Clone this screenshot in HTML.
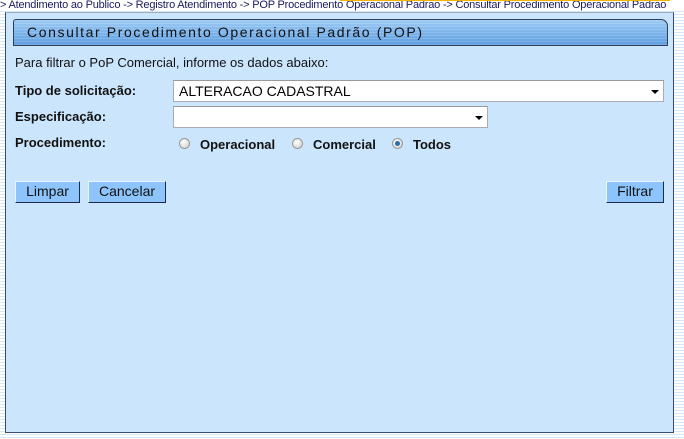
<!DOCTYPE html>
<html><head><meta charset="utf-8"><style>
*{margin:0;padding:0;box-sizing:border-box}
body{width:684px;height:439px;overflow:hidden;position:relative;font-family:"Liberation Sans",Arial,sans-serif;
background:repeating-linear-gradient(to bottom,#ffffff 0,#ffffff 2px,#d4e6f7 2px,#d4e6f7 3px);}
.crumb{position:absolute;left:0;top:0;width:684px;height:11px;background:#fff;font-size:11px;line-height:10px;color:#1a1a60;white-space:nowrap;overflow:hidden;letter-spacing:-0.2px}
.crumb:after{content:"";position:absolute;left:340px;right:14px;top:0;height:1px;background:#f4b400}
.panel{position:absolute;left:5px;top:12px;width:669px;height:421px;background:#cbe5fd;border:1px solid #3a4c66;border-top:1px solid #9ab}
.title{position:absolute;left:13px;top:19px;width:655px;height:27px;border:1px solid #2c3e58;border-top-right-radius:7px;border-top-left-radius:3px;
background:repeating-linear-gradient(to bottom,rgba(255,255,255,.15) 0,rgba(255,255,255,.15) 1px,transparent 1px,transparent 3px),linear-gradient(#9ccaf5,#5e9ee0);
font-size:14px;letter-spacing:1.6px;color:#111;padding:4px 0 0 13px}
.t{position:absolute;font-size:13px;color:#111;white-space:nowrap}
.b{font-weight:bold}
.sel{position:absolute;background:#fff;border:1px solid #aab;border-top-color:#999;font-size:14px;padding:2px 0 0 5px;color:#000}
.sel:after{content:"";position:absolute;right:4px;top:9px;border:4px solid transparent;border-top:4px solid #000;border-bottom:0}
.rad{position:absolute;width:11px;height:11px;border-radius:50%;border:1px solid #999;background:radial-gradient(circle at 40% 35%,#fff,#ccc)}
.rad.on:after{content:"";position:absolute;left:2px;top:2px;width:5px;height:5px;border-radius:50%;background:#2a6fa8}
.btn{position:absolute;height:22px;background:#8cc4fb;border:1px solid;border-color:#e8f4ff #1c2c44 #1c2c44 #e8f4ff;font-size:14px;text-align:center;line-height:19px;color:#111}
</style></head><body>
<div class="crumb">&gt; Atendimento ao Publico -&gt; Registro Atendimento -&gt; POP Procedimento Operacional Padrao -&gt; Consultar Procedimento Operacional Padrao</div>
<div class="panel"></div>
<div class="title">Consultar Procedimento Operacional Padrão (POP)</div>
<div class="t" style="left:15px;top:55px">Para filtrar o PoP Comercial, informe os dados abaixo:</div>
<div class="t b" style="left:15px;top:83px">Tipo de solicitação:</div>
<div class="sel" style="left:173px;top:80px;width:491px;height:22px">ALTERACAO CADASTRAL</div>
<div class="t b" style="left:15px;top:109px">Especificação:</div>
<div class="sel" style="left:173px;top:106px;width:315px;height:22px"></div>
<div class="t b" style="left:15px;top:135px">Procedimento:</div>
<div class="rad" style="left:179px;top:138px"></div><div class="t b" style="left:200px;top:137px">Operacional</div>
<div class="rad" style="left:292px;top:138px"></div><div class="t b" style="left:313px;top:137px">Comercial</div>
<div class="rad on" style="left:392px;top:138px"></div><div class="t b" style="left:413px;top:137px">Todos</div>
<div class="btn" style="left:15px;top:181px;width:65px">Limpar</div>
<div class="btn" style="left:88px;top:181px;width:78px">Cancelar</div>
<div class="btn" style="left:606px;top:181px;width:58px">Filtrar</div>
</body></html>
